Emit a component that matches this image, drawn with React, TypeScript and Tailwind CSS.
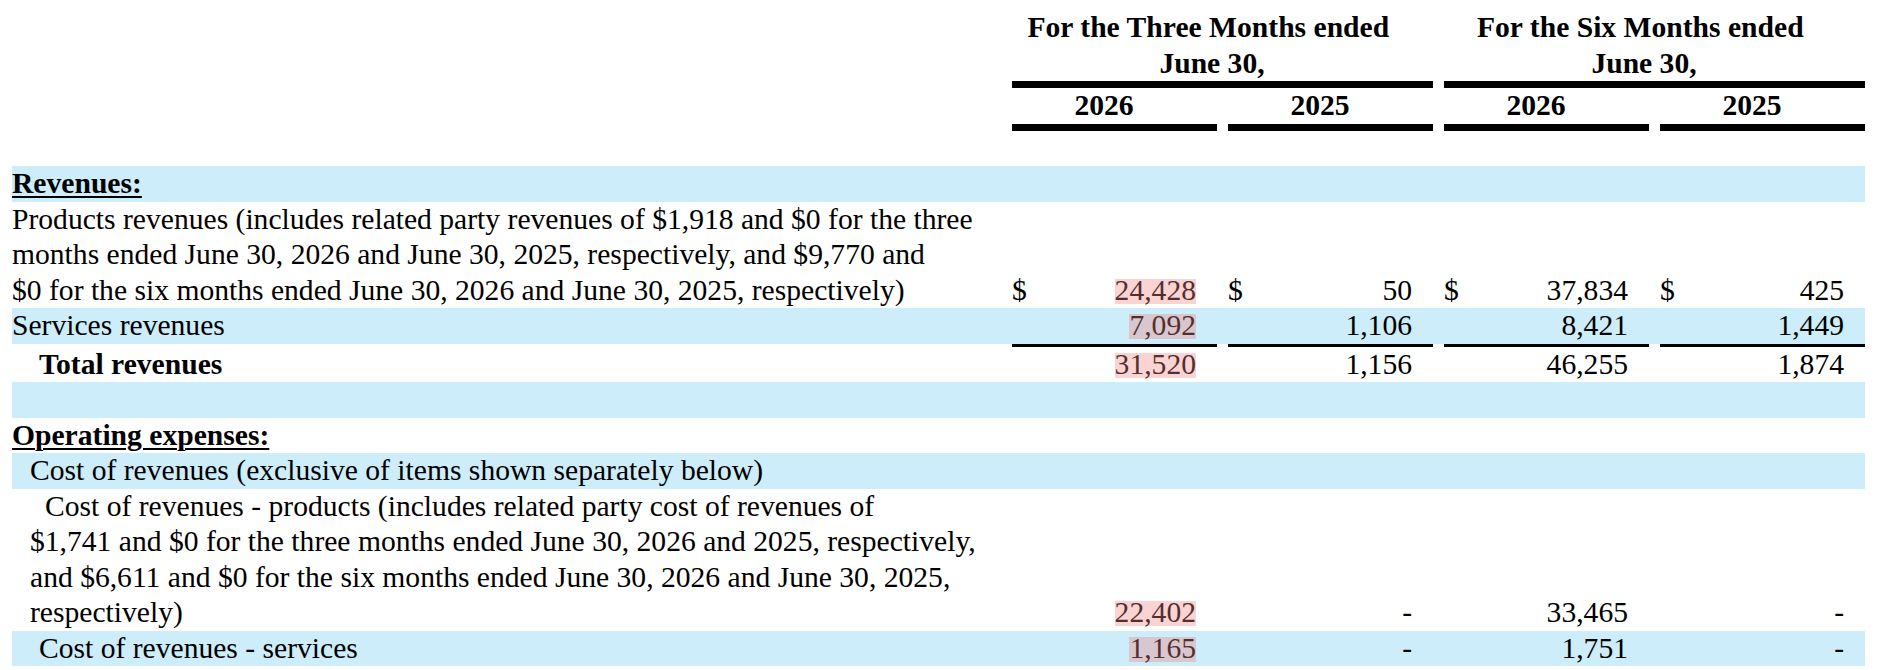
import type { ReactNode } from 'react'

// highlight box that sits on top of a figure (tints the digits too)
function Hl({ children }: { children: ReactNode }) {
  return (
    <span className="relative">
      {children}
      <span className="absolute inset-x-0 top-[5px] bottom-[2px] bg-[rgba(240,128,128,0.35)]" />
    </span>
  )
}

type NumProps = {
  v?: string
  dollar?: boolean
  hl?: boolean
  rule?: boolean
}

function Num({ v = '', dollar, hl, rule }: NumProps) {
  return (
    <td className="p-0 align-bottom">
      <div
        className={
          rule
            ? 'ml-[11px] flex justify-between border-t-[3px] border-black pr-[21px]'
            : 'ml-[11px] flex justify-between pr-[21px]'
        }
      >
        <span>{dollar ? '$' : ''}</span>
        <span>{hl ? <Hl>{v}</Hl> : v}</span>
      </div>
    </td>
  )
}

function Blank() {
  return (
    <>
      <td className="p-0">&nbsp;</td>
      <td className="p-0" />
      <td className="p-0" />
      <td className="p-0" />
      <td className="p-0" />
    </>
  )
}

export default function App() {
  return (
    <div className="min-h-[670px] bg-white pl-[12px] pt-[10px] font-['Liberation_Serif','Times_New_Roman',serif] text-[29.6px] leading-[35.5px] text-black">
      <table className="w-[1853px] table-fixed">
        <colgroup>
          <col className="w-[989px]" />
          <col className="w-[216px]" />
          <col className="w-[216px]" />
          <col className="w-[216px]" />
          <col className="w-[216px]" />
        </colgroup>
        <thead>
          <tr>
            <th className="p-0" />
            <th colSpan={2} className="p-0 align-bottom font-bold">
              <div className="ml-[11px] border-b-[7px] border-black pr-[21px] text-center">
                For the Three Months ended{'\u00a0'}
                <br />
                June 30,
              </div>
            </th>
            <th colSpan={2} className="p-0 align-bottom font-bold">
              <div className="ml-[11px] border-b-[7px] border-black pr-[21px] text-center">
                For the Six Months ended{'\u00a0'}
                <br />
                June 30,
              </div>
            </th>
          </tr>
          <tr>
            <th className="p-0" />
            {['2026', '2025', '2026', '2025'].map((y, i) => (
              <th key={i} className="p-0 font-bold">
                <div className="ml-[11px] border-b-[7px] border-black pr-[21px] text-center">{y}</div>
              </th>
            ))}
          </tr>
        </thead>
        <tbody>
          <tr>
            <Blank />
          </tr>

          <tr className="bg-[#cdedfa]">
            <td className="p-0 font-bold">
              <span className="underline decoration-[2px] underline-offset-[3px]">Revenues:</span>
            </td>
            <td className="p-0" />
            <td className="p-0" />
            <td className="p-0" />
            <td className="p-0" />
          </tr>

          <tr>
            <td className="whitespace-nowrap p-0">
              Products revenues (includes related party revenues of $1,918 and $0 for the three
              <br />
              months ended June 30, 2026 and June 30, 2025, respectively, and $9,770 and
              <br />
              $0 for the six months ended June 30, 2026 and June 30, 2025, respectively)
            </td>
            <Num v="24,428" dollar hl />
            <Num v="50" dollar />
            <Num v="37,834" dollar />
            <Num v="425" dollar />
          </tr>

          <tr className="bg-[#cdedfa]">
            <td className="p-0">Services revenues</td>
            <Num v="7,092" hl />
            <Num v="1,106" />
            <Num v="8,421" />
            <Num v="1,449" />
          </tr>

          <tr>
            <td className="p-0 pl-[27px] align-bottom font-bold">Total revenues</td>
            <Num v="31,520" hl rule />
            <Num v="1,156" rule />
            <Num v="46,255" rule />
            <Num v="1,874" rule />
          </tr>

          <tr className="bg-[#cdedfa]">
            <Blank />
          </tr>

          <tr>
            <td className="p-0 font-bold">
              <span className="underline decoration-[2px] underline-offset-[3px]">Operating expenses:</span>
            </td>
            <td className="p-0" />
            <td className="p-0" />
            <td className="p-0" />
            <td className="p-0" />
          </tr>

          <tr className="bg-[#cdedfa]">
            <td className="whitespace-nowrap p-0 pl-[18px]">
              Cost of revenues (exclusive of items shown separately below)
            </td>
            <td className="p-0" />
            <td className="p-0" />
            <td className="p-0" />
            <td className="p-0" />
          </tr>

          <tr>
            <td className="whitespace-nowrap p-0 pl-[18px] indent-[15px]">
              Cost of revenues - products (includes related party cost of revenues of
              <br />
              $1,741 and $0 for the three months ended June 30, 2026 and 2025, respectively,
              <br />
              and $6,611 and $0 for the six months ended June 30, 2026 and June 30, 2025,
              <br />
              respectively)
            </td>
            <Num v="22,402" hl />
            <Num v="-" />
            <Num v="33,465" />
            <Num v="-" />
          </tr>

          <tr className="bg-[#cdedfa]">
            <td className="p-0 pl-[27px]">Cost of revenues - services</td>
            <Num v="1,165" hl />
            <Num v="-" />
            <Num v="1,751" />
            <Num v="-" />
          </tr>
        </tbody>
      </table>
    </div>
  )
}
